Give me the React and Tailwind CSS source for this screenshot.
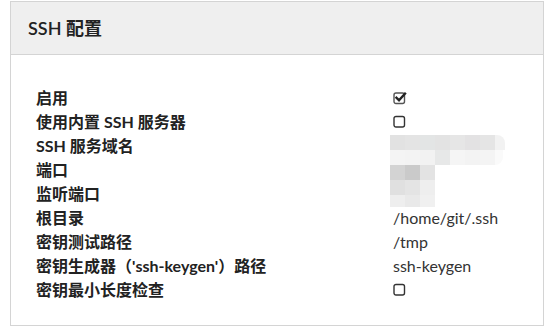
import React from "react";

const font = { fontFamily: 'Lato, "Noto Sans CJK SC", sans-serif' };

function Checked() {
  return (
    <svg width="15" height="14" viewBox="0 0 15 14" className="block">
      <rect x="1" y="2" width="10.5" height="10.5" rx="2" fill="none" stroke="#555" strokeWidth="1.4" />
      <path d="M3.5 6.8 L6 9.2 L12 2.6" fill="none" stroke="#222" strokeWidth="2.4" strokeLinecap="square" />
    </svg>
  );
}

function Unchecked() {
  return (
    <svg width="15" height="14" viewBox="0 0 15 14" className="block">
      <rect x="1" y="1.5" width="10.5" height="10.5" rx="2" fill="none" stroke="#333" strokeWidth="1.4" />
    </svg>
  );
}

const mosaic1 = ["#e2e2e2", "#e4e4e4", "#e3e5e5", "#e3e3e3", "#e6e6e6", "#e3e2e3", "#e5e5e5"];
const mosaic2 = ["#f4f4f4", "#f3f3f3", "#f2f2f2", "#e7e8e8", "#f5f5f5", "#f3f3f3", "#f4f4f4"];
const mosaic3 = [
  ["#d3d3d3", "#cacaca", "#e3e3e3"],
  ["#e0e0e0", "#e4e4e4", "#eeeeee"],
  ["#eeeeee", "#e9e9e9", "#f0f0f0"],
];

function Mosaic() {
  return (
    <div className="relative h-0">
      <div className="absolute left-[-3px] top-[-11px] flex flex-col">
        <div className="flex">
          {mosaic1.map((c, i) => (
            <div key={i} className="w-[15px] h-[15px]" style={{ background: c }} />
          ))}
          <div className="w-[10px] h-[15px] bg-[#f2f2f2] rounded-tr-[8px]" />
        </div>
        <div className="flex">
          {mosaic2.map((c, i) => (
            <div key={i} className="w-[15px] h-[15px]" style={{ background: c }} />
          ))}
          <div className="w-[8px] h-[15px] bg-[#fafafa] rounded-br-[8px]" />
        </div>
        {mosaic3.map((row, r) => (
          <div key={r} className="flex">
            {row.map((c, i) => (
              <div key={i} className={`w-[15px] ${r === 2 ? "h-[12px]" : "h-[15px]"}`} style={{ background: c }} />
            ))}
          </div>
        ))}
      </div>
    </div>
  );
}

const rows = [
  ["启用", <Checked />],
  ["使用内置 SSH 服务器", <Unchecked />],
  ["SSH 服务域名", <Mosaic />],
  ["端口", null],
  ["监听端口", null],
  ["根目录", "/home/git/.ssh"],
  ["密钥测试路径", "/tmp"],
  ["密钥生成器（'ssh-keygen'）路径", "ssh-keygen"],
  ["密钥最小长度检查", <Unchecked />],
];

export default function App() {
  return (
    <div className="w-[545px] h-[329px] bg-white overflow-hidden" style={font}>
      <div className="ml-[10px] mt-[1px] w-[534px] border border-[#d4d4d4] text-[#333]">
        <div className="h-[53px] bg-[#efefef] border-b border-[#d4d4d4] pl-[17px] flex items-center">
          <span className="text-[18px] font-semibold text-[#222] leading-none">SSH 配置</span>
        </div>
        <div className="pl-[25px] pt-[31px] pb-[23px]">
          {rows.map(([label, value], i) => (
            <div key={i} className="grid grid-cols-[357px_1fr] h-[24px] items-center text-[16px] leading-[24px]">
              <div className="font-bold text-[#222]">{label}</div>
              <div className="text-[#333]">{value}</div>
            </div>
          ))}
        </div>
      </div>
    </div>
  );
}
